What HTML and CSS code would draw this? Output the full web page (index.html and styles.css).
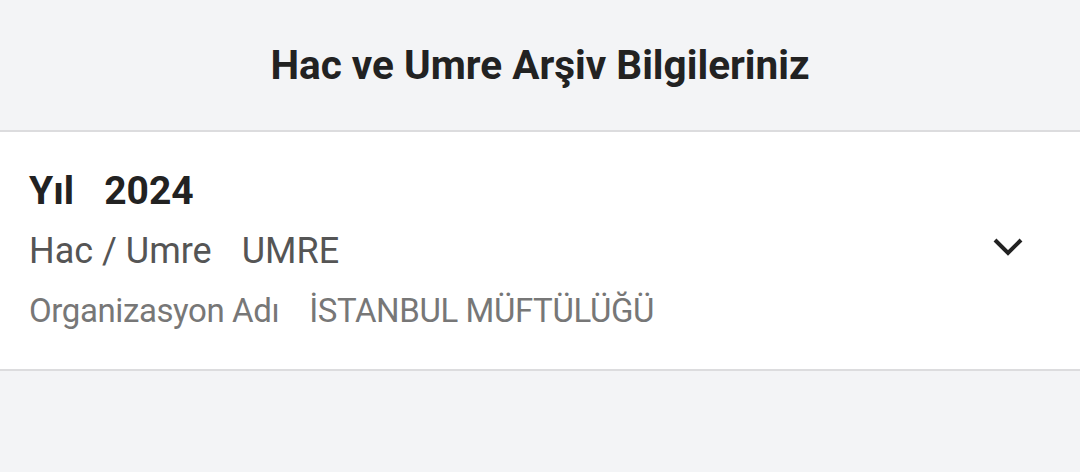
FILE: index.html
```html
<!DOCTYPE html>
<html lang="tr">
<head>
    <meta charset="UTF-8">
    <title>Hac ve Umre Arşiv Bilgileriniz</title>
    <link rel="stylesheet" href="styles.css">
</head>
<body>
    <header class="top-bar">
        <h1>Hac ve Umre Arşiv Bilgileriniz</h1>
    </header>

    <section class="archive-card">
        <div class="archive-info">
            <div class="row row-year">
                <span class="label">Yıl</span>
                <span class="value">2024</span>
            </div>
            <div class="row row-type">
                <span class="label">Hac / Umre</span>
                <span class="value">UMRE</span>
            </div>
            <div class="row row-org">
                <span class="label">Organizasyon Adı</span>
                <span class="value">İSTANBUL MÜFTÜLÜĞÜ</span>
            </div>
        </div>
        <svg class="chevron" width="32" height="24" viewBox="0 0 32 24">
            <path d="M3 4 L16 17 L29 4" fill="none" stroke="#222" stroke-width="4"/>
        </svg>
    </section>
</body>
</html>
```

FILE: styles.css
```css
body {
    margin: 0;
    padding: 0;
    background-color: #f3f4f6;
    font-family: Roboto, "Liberation Sans", sans-serif;
    color: #222;
}

.top-bar {
    height: 130px;
    display: flex;
    align-items: center;
    justify-content: center;
    border-bottom: 2px solid #dcdcde;
}

.top-bar h1 {
    margin: 0;
    font-size: 40.5px;
    font-weight: 700;
    color: #222;
}

.archive-card {
    box-sizing: border-box;
    background-color: #fff;
    height: 239px;
    border-bottom: 2px solid #dcdcde;
    display: flex;
    align-items: flex-start;
    justify-content: space-between;
    padding: 37px 56px 0 29px;
}

.archive-info {
    display: flex;
    flex-direction: column;
    gap: 16px;
}

.row {
    display: flex;
    gap: 30px;
    line-height: 44px;
}

.row-year {
    font-size: 39px;
    font-weight: 700;
    color: #222;
}

.row-type {
    font-size: 36px;
    color: #555;
}

.row-org {
    font-size: 33px;
    color: #777;
    letter-spacing: -0.4px;
}

.chevron {
    margin-top: 67px;
}
```
